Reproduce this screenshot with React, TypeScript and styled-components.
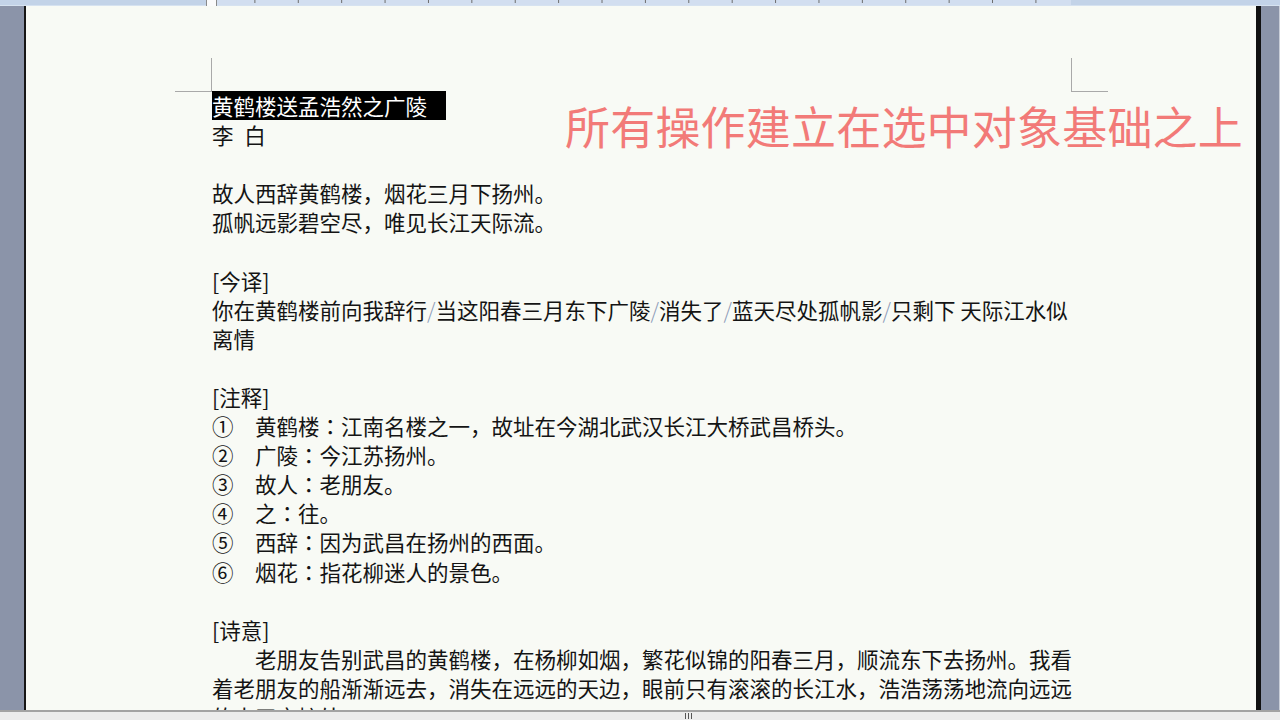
import React from 'react'
import styled, {createGlobalStyle} from 'styled-components'

const GlobalStyle = createGlobalStyle`
  html, body {
    margin: 0;
    padding: 0;
    overflow: hidden;
  }
  body {
    font-family: "Noto Sans CJK SC", "Noto Sans", sans-serif;
  }
`;

const Screen = styled.div`
    width: 1280px;
    height: 720px;
    display: flex;
    flex-direction: column;
    overflow: hidden;
    background-color: #e6e6e6;
`;

const Ruler = styled.div`
    flex: 0 0 6px;
    display: flex;
    background-color: #c3d3e8;
    border-bottom: 1px solid #d6e2f0;
    box-sizing: border-box;
`;

const RulerMargin = styled.div<{$w: number}>`
    flex: 0 0 ${p => p.$w}px;
    position: relative;
`;

const RulerBody = styled.div`
    flex: 0 0 860px;
    background-color: #d2def0;
    background-image: linear-gradient(to right, #6b6b6b 1px, transparent 1px);
    background-size: 43.4px 3px;
    background-repeat: repeat-x;
    background-position: 0 0;
`;

const IndentMarker = styled.div`
    position: absolute;
    right: -6px;
    top: -3px;
    width: 9px;
    height: 8px;
    background-color: #fbfbfb;
    border: 1px solid #8a8a8a;
`;

const Middle = styled.div`
    flex: 1;
    display: flex;
    min-height: 0;
`;

const Gutter = styled.div<{$side: 'left' | 'right'}>`
    background-color: #8b94a9;
    ${p => p.$side === 'left'
      ? 'flex: 0 0 24px; border-right: 2px solid #161616;'
      : 'flex: 0 0 18px; border-left: 5px solid #111; border-right: 1px solid #c9ced8;'}
`;

const Page = styled.div`
    flex: 1;
    position: relative;
    background-color: #f8faf5;
    padding: 85px 0 0 186px;
    overflow: hidden;
`;

const TextBox = styled.div`
    position: relative;
    width: 859px;
    color: #141414;
    font-size: 21.5px;
    line-height: 29.1px;
    white-space: nowrap;

    &::before, &::after {
        content: "";
        position: absolute;
        top: -33px;
        width: 36px;
        height: 33px;
        border-bottom: 1px solid #a9a9a9;
    }
    &::before {
        left: -37px;
        border-right: 1px solid #a9a9a9;
    }
    &::after {
        right: -37px;
        border-left: 1px solid #a9a9a9;
    }
`;

const Line = styled.div<{$indent?: boolean}>`
    height: 29.1px;
    padding-left: ${p => (p.$indent ? '43px' : '0')};
`;

const Selected = styled.span`
    display: inline-block;
    background-color: #000;
    color: #fff;
    padding-right: 19px;
    line-height: 29.1px;
`;

const NoteNum = styled.span`
    display: inline-block;
    width: 43px;
`;

const Colon = styled.span`
    font-family: "Noto Sans CJK TC", "Noto Sans CJK SC", sans-serif;
`;

const Slash = styled.span`
    color: #8e9cb8;
    font-weight: 300;
`;

const Caption = styled.div`
    position: absolute;
    left: 539px;
    top: 97px;
    font-size: 45px;
    line-height: 1;
    letter-spacing: 0.2px;
    color: #f27a78;
    white-space: nowrap;
`;

const BottomBar = styled.div`
    flex: 0 0 10px;
    border-top: 2px solid #a3a3a3;
    background-color: #ececec;
    box-sizing: border-box;
    display: flex;
    justify-content: center;
    padding-left: 96px;
`;

const Grip = styled.div`
    width: 7px;
    height: 6px;
    margin-top: 1px;
    background-image: repeating-linear-gradient(to right, #555 0 1px, transparent 1px 3px);
`;

const notes = [
  ['①', '黄鹤楼', '江南名楼之一，故址在今湖北武汉长江大桥武昌桥头。'],
  ['②', '广陵', '今江苏扬州。'],
  ['③', '故人', '老朋友。'],
  ['④', '之', '往。'],
  ['⑤', '西辞', '因为武昌在扬州的西面。'],
  ['⑥', '烟花', '指花柳迷人的景色。'],
]

const translation = ['你在黄鹤楼前向我辞行', '当这阳春三月东下广陵', '消失了', '蓝天尽处孤帆影', '只剩下 天际江水似']

const App: React.FC = () => {
  return (
    <>
      <GlobalStyle />
      <Screen>
        <Ruler>
          <RulerMargin $w={211}>
            <IndentMarker />
          </RulerMargin>
          <RulerBody />
          <RulerMargin $w={209} />
        </Ruler>
        <Middle>
          <Gutter $side="left" />
          <Page>
            <TextBox>
              <Line><Selected>黄鹤楼送孟浩然之广陵</Selected></Line>
              <Line>李{'\u2002'}白</Line>
              <Line />
              <Line>故人西辞黄鹤楼，烟花三月下扬州。</Line>
              <Line>孤帆远影碧空尽，唯见长江天际流。</Line>
              <Line />
              <Line>[今译]</Line>
              <Line>
                {translation.map((part, i) => (
                  <React.Fragment key={i}>
                    {i > 0 && <Slash>/</Slash>}
                    {part}
                  </React.Fragment>
                ))}
              </Line>
              <Line>离情</Line>
              <Line />
              <Line>[注释]</Line>
              {notes.map(([n, term, text]) => (
                <Line key={n}><NoteNum>{n}</NoteNum>{term}<Colon>：</Colon>{text}</Line>
              ))}
              <Line />
              <Line>[诗意]</Line>
              <Line $indent>老朋友告别武昌的黄鹤楼，在杨柳如烟，繁花似锦的阳春三月，顺流东下去扬州。我看</Line>
              <Line>着老朋友的船渐渐远去，消失在远远的天边，眼前只有滚滚的长江水，浩浩荡荡地流向远远</Line>
              <Line>的水天交接处。</Line>
            </TextBox>
            <Caption>所有操作建立在选中对象基础之上</Caption>
          </Page>
          <Gutter $side="right" />
        </Middle>
        <BottomBar>
          <Grip />
        </BottomBar>
      </Screen>
    </>
  )
}

export default App
